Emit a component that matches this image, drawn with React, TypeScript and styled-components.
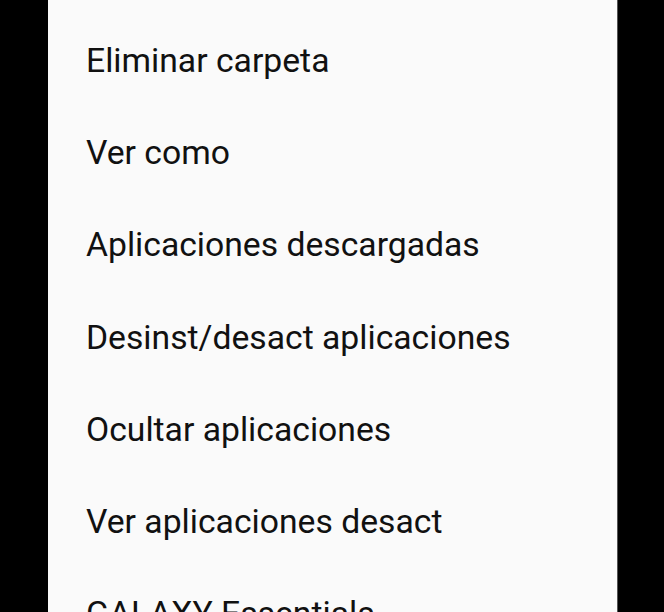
import React from "react";
import styled, { createGlobalStyle } from "styled-components";

const Global = createGlobalStyle`
  html, body { margin: 0; padding: 0; background: #000; }
  body { width: 664px; height: 612px; overflow: hidden; }
`;

const Screen = styled.div`
  width: 664px;
  height: 612px;
  background: #000;
  display: flex;
  overflow: hidden;
`;

const Panel = styled.ul`
  margin: 0 0 0 48px;
  padding: 14px 0 0 0;
  width: 569px;
  height: 700px;
  background: #fafafa;
  border-right: 1px solid #555;
  list-style: none;
  display: flex;
  flex-direction: column;
`;

const Item = styled.li`
  height: 92.3px;
  display: flex;
  align-items: center;
  padding-left: 38px;
  font-family: Roboto, "Noto Sans", sans-serif;
  font-size: 33.7px;
  color: #111;
  white-space: nowrap;
`;

const items = [
  "Eliminar carpeta",
  "Ver como",
  "Aplicaciones descargadas",
  "Desinst/desact aplicaciones",
  "Ocultar aplicaciones",
  "Ver aplicaciones desact",
  "GALAXY Essentials",
];

export default function App() {
  return (
    <Screen>
      <Global />
      <Panel>
        {items.map((t) => (
          <Item key={t}>{t}</Item>
        ))}
      </Panel>
    </Screen>
  );
}
